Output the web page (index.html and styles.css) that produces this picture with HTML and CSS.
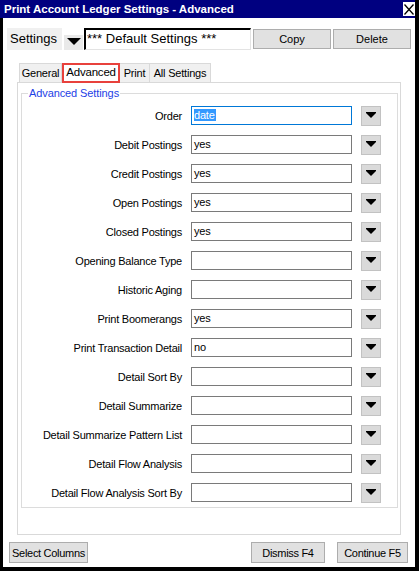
FILE: index.html
```html
<!DOCTYPE html>
<html lang="en">
<head>
<meta charset="utf-8">
<title>Print Account Ledger Settings - Advanced</title>
<link rel="stylesheet" href="styles.css">
</head>
<body>
<div class="window">
  <div class="titlebar">
    <span class="title">Print Account Ledger Settings - Advanced</span>
    <span class="close"><svg width="12" height="13" viewBox="0 0 12 13"><path d="M1.5 1.5 L10.5 11.5 M10.5 1.5 L1.5 11.5" stroke="#000" stroke-width="1.3" fill="none"/></svg></span>
  </div>
  <div class="client">
    <div class="settings-row">
      <div class="settings-label">Settings</div>
      <div class="combo-btn"><svg width="14" height="8" viewBox="0 0 14 8"><polygon points="0,0 14,0 7,7" fill="#000"/></svg></div>
      <div class="settings-input">*** Default Settings ***</div>
      <button class="btn top-btn">Copy</button>
      <button class="btn top-btn">Delete</button>
    </div>
    <div class="tabs">
      <div class="tab tab-general">General</div>
      <div class="tab tab-active">Advanced</div>
      <div class="tab tab-print">Print</div>
      <div class="tab tab-all">All Settings</div>
    </div>
    <div class="panel">
      <fieldset class="group">
        <legend>Advanced Settings</legend>
        <div class="rows">
          <div class="lbl">Order</div><div class="field focus"><span class="sel">date</span></div><div class="dd"><svg width="10" height="6" viewBox="0 0 10 6"><polygon points="0,0 10,0 10,1 5,6 0,1" fill="#000"/></svg></div>
          <div class="lbl">Debit Postings</div><div class="field">yes</div><div class="dd"><svg width="10" height="6" viewBox="0 0 10 6"><polygon points="0,0 10,0 10,1 5,6 0,1" fill="#000"/></svg></div>
          <div class="lbl">Credit Postings</div><div class="field">yes</div><div class="dd"><svg width="10" height="6" viewBox="0 0 10 6"><polygon points="0,0 10,0 10,1 5,6 0,1" fill="#000"/></svg></div>
          <div class="lbl">Open Postings</div><div class="field">yes</div><div class="dd"><svg width="10" height="6" viewBox="0 0 10 6"><polygon points="0,0 10,0 10,1 5,6 0,1" fill="#000"/></svg></div>
          <div class="lbl">Closed Postings</div><div class="field">yes</div><div class="dd"><svg width="10" height="6" viewBox="0 0 10 6"><polygon points="0,0 10,0 10,1 5,6 0,1" fill="#000"/></svg></div>
          <div class="lbl">Opening Balance Type</div><div class="field"></div><div class="dd"><svg width="10" height="6" viewBox="0 0 10 6"><polygon points="0,0 10,0 10,1 5,6 0,1" fill="#000"/></svg></div>
          <div class="lbl">Historic Aging</div><div class="field"></div><div class="dd"><svg width="10" height="6" viewBox="0 0 10 6"><polygon points="0,0 10,0 10,1 5,6 0,1" fill="#000"/></svg></div>
          <div class="lbl">Print Boomerangs</div><div class="field">yes</div><div class="dd"><svg width="10" height="6" viewBox="0 0 10 6"><polygon points="0,0 10,0 10,1 5,6 0,1" fill="#000"/></svg></div>
          <div class="lbl">Print Transaction Detail</div><div class="field">no</div><div class="dd"><svg width="10" height="6" viewBox="0 0 10 6"><polygon points="0,0 10,0 10,1 5,6 0,1" fill="#000"/></svg></div>
          <div class="lbl">Detail Sort By</div><div class="field"></div><div class="dd"><svg width="10" height="6" viewBox="0 0 10 6"><polygon points="0,0 10,0 10,1 5,6 0,1" fill="#000"/></svg></div>
          <div class="lbl">Detail Summarize</div><div class="field"></div><div class="dd"><svg width="10" height="6" viewBox="0 0 10 6"><polygon points="0,0 10,0 10,1 5,6 0,1" fill="#000"/></svg></div>
          <div class="lbl">Detail Summarize Pattern List</div><div class="field"></div><div class="dd"><svg width="10" height="6" viewBox="0 0 10 6"><polygon points="0,0 10,0 10,1 5,6 0,1" fill="#000"/></svg></div>
          <div class="lbl">Detail Flow Analysis</div><div class="field"></div><div class="dd"><svg width="10" height="6" viewBox="0 0 10 6"><polygon points="0,0 10,0 10,1 5,6 0,1" fill="#000"/></svg></div>
          <div class="lbl">Detail Flow Analysis Sort By</div><div class="field"></div><div class="dd"><svg width="10" height="6" viewBox="0 0 10 6"><polygon points="0,0 10,0 10,1 5,6 0,1" fill="#000"/></svg></div>
        </div>
      </fieldset>
    </div>
    <div class="footer">
      <button class="btn btn-select">Select Columns</button>
      <div class="footer-right">
        <button class="btn btn-dismiss">Dismiss F4</button>
        <button class="btn btn-continue">Continue F5</button>
      </div>
    </div>
  </div>
</div>
</body>
</html>
```
FILE: styles.css
```css
* { box-sizing: border-box; }
html, body { margin: 0; padding: 0; background: #000; }
body { font-family: "Liberation Sans", Arial, sans-serif; color: #000; }

.window {
  width: 419px;
  height: 571px;
  background: #000;
  display: flex;
  flex-direction: column;
}

.titlebar {
  width: 415px;
  height: 18px;
  background: #000080;
  display: flex;
  align-items: flex-start;
  justify-content: space-between;
}
.title {
  color: #fff;
  font-weight: bold;
  font-size: 11.5px;
  line-height: 18px;
  padding-left: 4px;
  white-space: nowrap;
}
.close {
  width: 12px;
  height: 14px;
  margin-top: 2px;
  background: #fff;
  display: flex;
  align-items: center;
  justify-content: center;
}
.close svg { display: block; }

.client {
  width: 412px;
  height: 549px;
  margin-left: 3px;
  background: #fff;
  display: flex;
  flex-direction: column;
}

/* settings row */
.settings-row {
  display: flex;
  align-items: flex-start;
  margin: 10px 0 0 4px;
  height: 22px;
}
.settings-label {
  width: 55px;
  height: 22px;
  background: #f0f0f0;
  font-size: 13px;
  line-height: 22px;
  padding-left: 3px;
}
.combo-btn {
  width: 19px;
  height: 15px;
  margin: 7px 0 0 2px;
  background: #e9e9e9;
  display: flex;
  justify-content: center;
  padding-top: 3px;
}
.combo-btn svg { display: block; }
.settings-input {
  width: 167px;
  height: 22px;
  margin-left: 1px;
  border-top: 2px solid #000;
  border-left: 2px solid #000;
  border-right: 1px solid #e3e3e3;
  border-bottom: 1px solid #e3e3e3;
  font-size: 13px;
  line-height: 18px;
  padding-left: 1px;
  white-space: nowrap;
  overflow: hidden;
}

.btn {
  font-family: "Liberation Sans", Arial, sans-serif;
  font-size: 11px;
  color: #000;
  background: #e1e1e1;
  border: 1px solid #adadad;
  border-radius: 0;
  padding: 0;
  margin: 0;
  white-space: nowrap;
}
.top-btn {
  width: 78px;
  height: 20px;
  margin: 1px 0 0 2px;
  line-height: 18px;
}

/* tabs */
.tabs {
  display: flex;
  align-items: flex-end;
  height: 19px;
  margin: 13px 0 0 16px;
}
.tab {
  height: 19px;
  background: #f0f0f0;
  border: 1px solid #d9d9d9;
  border-bottom: none;
  font-size: 11px;
  letter-spacing: -0.2px;
  line-height: 18px;
  text-align: center;
  white-space: nowrap;
}
.tab-general { width: 43px; }
.tab-print { width: 30px; border-left: none; }
.tab-all { width: 61px; border-left: none; }
.tab-active {
  position: relative;
  z-index: 1;
  width: 58px;
  height: 20px;
  margin-bottom: -1px;
  background: #fff;
  border: 2px solid #e8413c;
  line-height: 15px;
  font-size: 11.5px;
}

/* panel */
.panel {
  width: 384px;
  height: 453px;
  margin-left: 14px;
  border: 1px solid #d9d9d9;
  background: #fff;
}
.group {
  width: 377px;
  height: 421px;
  margin: 4px 0 0 3px;
  padding: 0;
  border: 1px solid #dcdcdc;
  min-width: 0;
}
.group legend {
  margin-left: 6px;
  padding: 0 1px;
  font-size: 11px;
  line-height: 13px;
  color: #1d41e6;
  letter-spacing: -0.1px;
}
.rows {
  padding-top: 1px;
  display: grid;
  grid-template-columns: 160px 161px 20px;
  grid-auto-rows: 29px;
  column-gap: 9px;
  align-items: center;
}
.lbl {
  text-align: right;
  font-size: 11px;
  letter-spacing: -0.22px;
  white-space: nowrap;
}
.field {
  height: 19px;
  border: 1px solid #7a7a7a;
  background: #fff;
  font-size: 11px;
  line-height: 17px;
  padding-left: 2px;
  letter-spacing: -0.2px;
}
.field.focus { border-color: #0078d7; }
.sel { background: #3399ff; color: #fff; padding-right: 1px; }
.dd {
  width: 20px;
  height: 20px;
  background: #dadada;
  border: 1px solid #c2c2c2;
  display: flex;
  align-items: center;
  justify-content: center;
  padding-bottom: 2px;
}
.dd svg { display: block; }

/* footer */
.footer {
  display: flex;
  justify-content: space-between;
  margin-top: 7px;
  padding: 0 7px 0 6px;
}
.footer .btn {
  height: 21px;
  letter-spacing: -0.3px;
}
.btn-select { width: 79px; }
.footer-right { display: flex; }
.btn-dismiss { width: 74px; margin-right: 12px; }
.btn-continue { width: 71px; }
```
